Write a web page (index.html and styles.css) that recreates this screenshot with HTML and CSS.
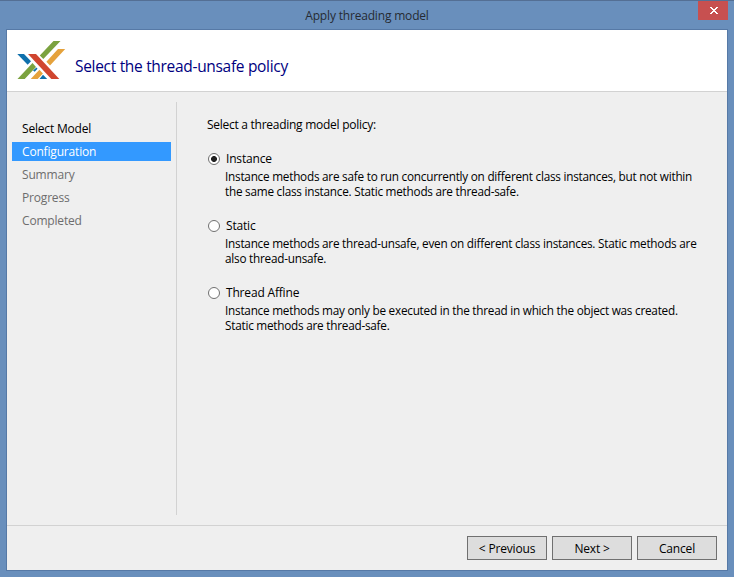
FILE: index.html
```html
<!DOCTYPE html>
<html lang="en">
<head>
<meta charset="utf-8">
<title>Apply threading model</title>
<link rel="stylesheet" href="styles.css">
</head>
<body>
<div class="window">
  <div class="titlebar">
    <span class="caption">Apply threading model</span>
    <button class="close" aria-label="Close"><svg width="8" height="7" viewBox="0 0 8 7" shape-rendering="crispEdges"><path d="M0 0h2v1h1v1h2v-1h1v-1h2v1h-1v1h-1v1h-1v1h1v1h1v1h1v1h-2v-1h-1v-1h-2v1h-1v1h-2v-1h1v-1h1v-1h1v-1h-1v-1h-1v-1h-1z" fill="#fff"/></svg></button>
  </div>
  <div class="client">
    <header class="header">
      <svg class="logo" width="50" height="40" viewBox="16 40 50 40">
        <path d="M17.3 54H24l7 7.3-3.3 3.5z" fill="#0f70ac"/>
        <path d="M33 70.5l3.5-3 1 1.3-2.8 3zM39.5 79l3.5-4.2 4.2 4.2z" fill="#0f70ac"/>
        <path d="M53.5 41H60.5L43.3 59l-3.5-3.6zM17.5 79h7.2l11.3-12-3.5-4z" fill="#7ba23f"/>
        <path d="M58 49h7.2L50 65.5l-3.6-3.7zM30.7 79h7l5.2-5.5-3.5-3.8z" fill="#e5a23c"/>
        <path d="M28 54h8l23.3 25h-8z" fill="#d0452f"/>
      </svg>
      <h1 class="heading">Select the thread-unsafe policy</h1>
    </header>
    <main class="main">
      <nav class="steps">
        <div class="step done">Select Model</div>
        <div class="step current">Configuration</div>
        <div class="step">Summary</div>
        <div class="step">Progress</div>
        <div class="step">Completed</div>
      </nav>
      <section class="content">
        <p class="prompt">Select a threading model policy:</p>
        <label class="option"><input type="radio" name="policy" checked><span>Instance</span></label>
        <p class="description">Instance methods are safe to run concurrently on different class instances, but not within<br>the same class instance. Static methods are thread-safe.</p>
        <label class="option"><input type="radio" name="policy"><span>Static</span></label>
        <p class="description">Instance methods are thread-unsafe, even on different class instances. Static methods are<br>also thread-unsafe.</p>
        <label class="option"><input type="radio" name="policy"><span>Thread Affine</span></label>
        <p class="description">Instance methods may only be executed in the thread in which the object was created.<br>Static methods are thread-safe.</p>
      </section>
    </main>
    <footer class="footer">
      <button class="button">&lt; Previous</button>
      <button class="button">Next &gt;</button>
      <button class="button">Cancel</button>
    </footer>
  </div>
</div>
</body>
</html>
```
FILE: styles.css
```css
* { box-sizing: border-box; }
body {
  margin: 0;
  font: 12px/15px "Open Sans", "Noto Sans", sans-serif;
  letter-spacing: -0.18px;
  color: #000;
}
.window {
  width: 734px;
  height: 577px;
  padding: 0 6px 6px;
  border-top: 1px solid #546f94;
  background: #698fbc;
  display: flex;
  flex-direction: column;
}
.titlebar {
  height: 28px;
  display: grid;
  grid-template-columns: 30px 1fr 30px;
  flex: none;
}
.caption {
  grid-column: 2;
  text-align: center;
  padding-top: 7px;
  color: #262b33;
}
.close {
  width: 30px;
  height: 19px;
  border: 0;
  padding: 0 0 0 2px;
  background: #c75050;
  display: flex;
  align-items: center;
  justify-content: center;
}
.client {
  flex: 1;
  border: 1px solid #5679a6;
  background: #efefef;
  display: flex;
  flex-direction: column;
}
.header {
  height: 62px;
  background: #fff;
  border-bottom: 1px solid #d2d2d2;
  padding: 10px 0 0 9px;
  display: flex;
  gap: 9px;
}
.logo { flex: none; }
.heading {
  margin: 15px 0 0;
  font-size: 15.5px;
  line-height: 22px;
  font-weight: 400;
  letter-spacing: -0.31px;
  color: #000080;
}
.main {
  height: 433px;
  padding: 10px 0 10px 5px;
  display: flex;
}
.steps {
  width: 165px;
  padding: 17px 5px 0 0;
  border-right: 1px solid #d2d2d2;
}
.step {
  height: 19px;
  margin-bottom: 4px;
  padding: 2px 10px;
  color: #6d6d6d;
}
.step.done { color: #000; }
.step.current { background: #3399ff; color: #fff; }
.content { padding: 15px 0 0 30px; white-space: nowrap; }
.prompt { margin: 0 0 19px; letter-spacing: -0.27px; }
.option {
  display: flex;
  align-items: center;
  gap: 6px;
  height: 15px;
  padding-left: 1px;
}
.option input {
  appearance: none;
  width: 12px;
  height: 12px;
  margin: 0;
  border: 1px solid #707070;
  border-radius: 50%;
  background: #fff;
}
.option input:checked { background: radial-gradient(circle, #212121 2.6px, #fff 3.3px); }
.description {
  margin: 3px 0 19px 18px;
  font-size: 11.75px;
  letter-spacing: -0.235px;
}
.footer {
  flex: 1;
  border-top: 1px solid #d2d2d2;
  padding: 10px 10px 0 0;
  display: flex;
  justify-content: flex-end;
  gap: 5px;
}
.button {
  width: 80px;
  height: 24px;
  padding: 0;
  border: 1px solid #707070;
  background: #ddd;
  font: inherit;
  letter-spacing: inherit;
  color: #000;
}
```
